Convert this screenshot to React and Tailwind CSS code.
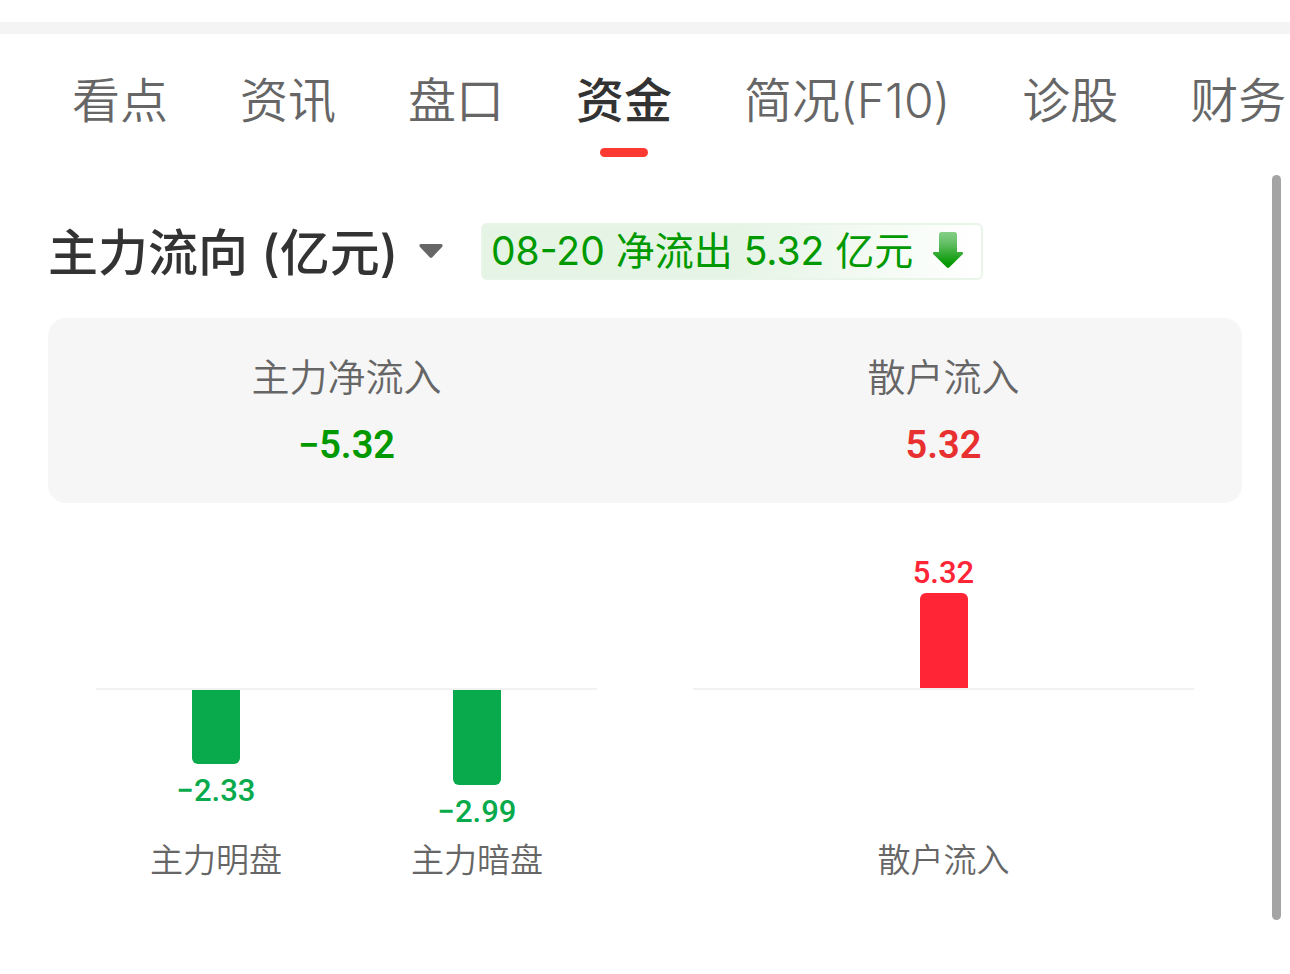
const tabs = ["看点", "资讯", "盘口", "资金", "简况(F10)", "诊股", "财务"];

const summary = [
  { label: "主力净流入", value: -5.32 },
  { label: "散户流入", value: 5.32 },
];

const charts = [
  {
    name: "主力",
    align: "justify-between",
    bars: [
      { label: "主力明盘", value: -2.33 },
      { label: "主力暗盘", value: -2.99 },
    ],
  },
  {
    name: "散户",
    align: "justify-center",
    bars: [{ label: "散户流入", value: 5.32 }],
  },
];

const BAR_MAX = 95;

function formatValue(value) {
  return value < 0 ? `−${Math.abs(value).toFixed(2)}` : value.toFixed(2);
}

function TabBar({ active }) {
  return (
    <div role="tablist" className="flex gap-[72px] overflow-hidden pt-[35px] pl-[72px]">
      {tabs.map((tab) => {
        const selected = tab === active;
        return (
          <button
            key={tab}
            type="button"
            role="tab"
            aria-selected={selected}
            className={`flex shrink-0 flex-col items-center gap-[15px] whitespace-nowrap text-[48px] leading-[64px] ${
              selected ? "font-medium text-[#333333]" : "font-[350] text-[#666666]"
            }`}
          >
            {tab}
            <span className={`h-[9px] w-12 rounded-full ${selected ? "bg-[#fd3a31]" : ""}`} />
          </button>
        );
      })}
    </div>
  );
}

function DownArrow() {
  return (
    <svg width="30" height="36" viewBox="0 0 30 36" aria-hidden="true">
      <defs>
        <linearGradient id="arrow-fill" x1="0" y1="0" x2="0" y2="1">
          <stop offset="0" stopColor="#85cf87" />
          <stop offset="0.3" stopColor="#66c068" />
          <stop offset="0.85" stopColor="#0a9a08" />
          <stop offset="1" stopColor="#009900" />
        </linearGradient>
      </defs>
      <path
        d="M8.500 0h13a2.500 2.500 0 0 1 2.500 2.500V20h4.800c1.200 0 1.600 1.400.8 2.200L16.400 35.300a2 2 0 0 1-2.800 0L.4 22.200C-.4 21.400 0 20 1.200 20H6V2.500A2.500 2.500 0 0 1 8.500 0Z"
        fill="url(#arrow-fill)"
      />
    </svg>
  );
}

function FlowHeader() {
  return (
    <div className="flex items-center gap-[38px]">
      <div className="relative">
        <select
          aria-label="资金流向指标"
          className="h-[72px] appearance-none bg-transparent pt-1 pr-11 text-[50px] leading-[68px] font-medium text-[#333333]"
        >
          <option>主力流向 (亿元)</option>
        </select>
        <svg
          className="pointer-events-none absolute top-1/2 right-0 -translate-y-1/2"
          width="24"
          height="14"
          viewBox="0 0 24 14"
          aria-hidden="true"
        >
          <path d="M2 0h20c1.600 0 2.200 1.800 1 2.900L13.600 12.900a2.200 2.200 0 0 1-3.200 0L1 2.900C-.2 1.800.4 0 2 0Z" fill="#666666" />
        </svg>
      </div>
      <p className="flex h-[57px] items-center gap-5 rounded-md border-2 border-[#e8f5e8] bg-linear-to-r from-[#e5f4e5] from-50% to-white pr-[18px] pb-[2px] pl-2 text-[39px] leading-[51px] whitespace-nowrap text-[#009900]">
        08-20 净流出 5.32 亿元
        <DownArrow />
      </p>
    </div>
  );
}

function Summary() {
  return (
    <dl className="mt-[31px] grid grid-cols-2 rounded-[18px] bg-[#f6f6f6] pt-[31px] pb-[30px] text-center">
      {summary.map(({ label, value }) => (
        <div key={label}>
          <dt className="text-[38px] leading-[56px] font-[350] text-[#666666]">{label}</dt>
          <dd
            className={`mt-3 font-[Roboto,sans-serif] text-[38px] leading-[56px] font-semibold ${
              value < 0 ? "text-[#009900]" : "text-[#e93030]"
            }`}
          >
            {formatValue(value)}
          </dd>
        </div>
      ))}
    </dl>
  );
}

function Bar({ value, max }) {
  const negative = value < 0;
  return (
    <>
      <span
        className={`w-12 ${negative ? "rounded-b-md bg-[#08aa4b]" : "rounded-t-md bg-[#ff2436]"}`}
        style={{ height: Math.round((Math.abs(value) / max) * BAR_MAX) }}
      />
      <span
        className={`font-[Roboto,sans-serif] text-[31px] leading-[40px] font-medium ${
          negative ? "mt-[7px] text-[#08aa4b]" : "text-[#ff2436]"
        }`}
      >
        {formatValue(value)}
      </span>
    </>
  );
}

function FlowChart({ name, align, bars }) {
  const max = Math.max(...bars.map((bar) => Math.abs(bar.value)));
  return (
    <section aria-label={name} className="mx-12">
      <div className={`flex h-[185px] px-12 ${align}`}>
        {bars.map((bar) => (
          <div key={bar.label} className="flex w-36 flex-col-reverse items-center">
            {bar.value > 0 && <Bar value={bar.value} max={max} />}
          </div>
        ))}
      </div>
      <div className={`flex h-[150px] border-t-2 border-[#f2f2f2] px-12 ${align}`}>
        {bars.map((bar) => (
          <div key={bar.label} className="flex w-36 flex-col items-center">
            {bar.value < 0 && <Bar value={bar.value} max={max} />}
          </div>
        ))}
      </div>
      <div className={`flex px-12 ${align}`}>
        {bars.map((bar) => (
          <span
            key={bar.label}
            className="w-36 text-center text-[33px] leading-[44px] font-[350] whitespace-nowrap text-[#666666]"
          >
            {bar.label}
          </span>
        ))}
      </div>
    </section>
  );
}

export default function App() {
  return (
    <div className="relative min-h-screen overflow-hidden bg-white pt-[22px] font-[Inter,'Noto_Sans_CJK_SC',sans-serif]">
      <div className="h-3 bg-[#f4f4f4]" />
      <TabBar active="资金" />
      <main className="px-12 pt-[58px]">
        <FlowHeader />
        <Summary />
        <div className="grid grid-cols-2">
          {charts.map((chart) => (
            <FlowChart key={chart.name} {...chart} />
          ))}
        </div>
      </main>
      <div aria-hidden="true" className="absolute top-[175px] right-[9px] bottom-[54px] w-[9px] rounded-full bg-[#a4a4a4]" />
    </div>
  );
}
